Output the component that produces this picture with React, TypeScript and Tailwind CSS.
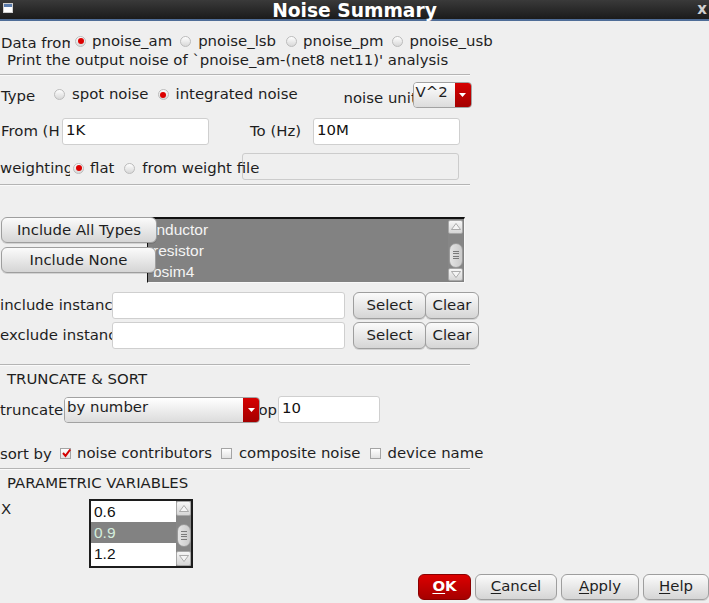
import React from 'react';
import clsx from 'clsx';

// small widgets that mimic the Cadence/Qt dialog look

function Radio({ on = false }: { on?: boolean }) {
  return (
    <span className="inline-flex h-[11px] w-[11px] shrink-0 items-center justify-center rounded-full border border-[#bcbcbc] bg-linear-to-b from-[#fefefe] to-[#d8d8d8]">
      {on && <span className="h-[6px] w-[6px] rounded-full bg-[#dc0000]" />}
    </span>
  );
}

function Check({ on = false }: { on?: boolean }) {
  return (
    <span className="relative inline-flex h-[11px] w-[11px] shrink-0 border border-[#a4a4a4] bg-linear-to-b from-white to-[#e2e2e2]">
      {on && (
        <svg viewBox="0 0 11 11" className="absolute left-[0px] top-[-1px] h-[11px] w-[11px]">
          <path d="M2 5 L4.5 7.8 L9.2 1.5" stroke="#d40000" strokeWidth="2" fill="none" />
        </svg>
      )}
    </span>
  );
}

function Btn({ className, children }: { className?: string; children: React.ReactNode }) {
  return (
    <div
      className={clsx(
        'flex items-center justify-center rounded-[6px] border border-[#9e9e9e] bg-linear-to-b from-[#fbfbfb] to-[#d5d5d5] text-[#1e1e1e] shadow-[0_1px_0_rgba(0,0,0,0.12)]',
        className,
      )}
    >
      {children}
    </div>
  );
}

function Combo({ className, value }: { className?: string; value: string }) {
  return (
    <div className={clsx('flex h-[26px] overflow-hidden rounded-[4px] border border-[#a2a2a2]', className)}>
      <div className="flex-1 whitespace-nowrap bg-linear-to-b from-white to-[#dcdcdc] pl-[2px] pt-[1px] leading-[17px] text-[#1e1e1e]">
        {value}
      </div>
      <div className="flex w-[16px] items-center justify-center bg-linear-to-b from-[#d60000] to-[#a40000]">
        <svg viewBox="0 0 7 4" className="h-[4px] w-[7px]">
          <path d="M0 0 L7 0 L3.5 4 Z" fill="#ffffff" />
        </svg>
      </div>
    </div>
  );
}

function Field({ className, value = '' }: { className?: string; value?: string }) {
  return (
    <div className={clsx('h-[27px] rounded-[3px] border border-[#cfcfcf] bg-white pl-[3px] pt-[3px] leading-[17px] text-[#111]', className)}>
      {value}
    </div>
  );
}

function Arrow({ up }: { up?: boolean }) {
  return (
    <div className="flex h-[15px] items-center justify-center rounded-[2px] border border-[#a8a8a8] bg-linear-to-b from-[#f6f6f6] to-[#d6d6d6]">
      <svg viewBox="0 0 10 7" className="h-[7px] w-[10px]">
        <path d={up ? 'M0.5 6.5 L5 0.5 L9.5 6.5 Z' : 'M0.5 0.5 L5 6.5 L9.5 0.5 Z'} fill="#f4f4f4" stroke="#9a9a9a" strokeWidth="0.8" />
      </svg>
    </div>
  );
}

function VScroll({ thumbTop, thumbH }: { thumbTop: string; thumbH: string }) {
  return (
    <div className="flex w-[15px] shrink-0 flex-col bg-[#868686]">
      <Arrow up />
      <div className="flex flex-1 flex-col items-center">
        <div
          className={clsx(
            'flex w-[14px] flex-col items-center justify-center gap-[1.5px] rounded-full border border-[#9a9a9a] bg-linear-to-r from-[#e4e4e4] to-[#cacaca]',
            thumbTop,
            thumbH,
          )}
        >
          {[0, 1, 2, 3].map((i) => (
            <span key={i} className="h-[1px] w-[6px] bg-[#7a7a7a]" />
          ))}
        </div>
      </div>
      <Arrow />
    </div>
  );
}

function Sep() {
  return <div className="h-[1px] w-[470px] bg-[#b4b4b4] shadow-[0_1px_0_#fafafa]" />;
}

export default function App() {
  return (
    <div className="h-[603px] w-[709px] overflow-hidden bg-[#efefef] font-['DejaVu_Sans',sans-serif] text-[14.9px] leading-[17px] text-[#1e1e1e]">
      {/* window title bar */}
      <div className="relative flex h-[21px] items-center justify-center border-b-2 border-[#4f6d97] bg-linear-to-b from-[#3a3a3a] to-[#1b1b1b]">
        <div className="absolute left-[3px] top-[3px] h-[10px] w-[10px] border border-[#d0d0d0] bg-white">
          <div className="h-[3px] bg-[#5a7cae]" />
        </div>
        <span className="pt-[1px] text-[18.67px] font-bold leading-[19px] text-white">Noise Summary</span>
        <span className="absolute right-[2px] top-[1px] text-[15px] font-bold leading-[16px] text-[#d0d0d0]">x</span>
      </div>

      <div className="flex flex-col">
        {/* data from */}
        <div className="mt-[10px] flex h-[20px] items-center">
          <span className="w-[70px] shrink-0 overflow-hidden whitespace-nowrap pl-[1px] pt-[4px]">Data from</span>
          <div className="ml-[5px] flex items-center">
            <Radio on />
            <span className="ml-[6px] mr-[8px]">pnoise_am</span>
            <Radio />
            <span className="ml-[7px] mr-[10px]">pnoise_lsb</span>
            <Radio />
            <span className="ml-[6px] mr-[9px]">pnoise_pm</span>
            <Radio />
            <span className="ml-[6px]">pnoise_usb</span>
          </div>
        </div>
        <div className="mt-[1px] h-[16px] whitespace-nowrap pl-[7px] leading-[16px]">
          Print the output noise of `pnoise_am-(net8 net11)' analysis
        </div>
        <div className="mt-[6px]">
          <Sep />
        </div>

        {/* type */}
        <div className="mt-[7px] flex h-[26px] items-start">
          <span className="mt-[6px] w-[54px] shrink-0 pl-[1px]">Type</span>
          <div className="mt-[4px] flex items-center">
            <Radio />
            <span className="ml-[7px] mr-[9px]">spot noise</span>
            <Radio on />
            <span className="ml-[7px]">integrated noise</span>
          </div>
          <span className="ml-[46px] mt-[8px] w-[69px] shrink-0 overflow-hidden whitespace-nowrap">noise units</span>
          <Combo className="w-[59px]" value="V^2" />
        </div>

        {/* frequency range */}
        <div className="mt-[10px] flex h-[27px] items-center">
          <span className="w-[59px] shrink-0 overflow-hidden whitespace-nowrap pl-[1px]">From (Hz)</span>
          <Field className="ml-[3px] w-[147px]" value="1K" />
          <span className="ml-[41px] w-[63px] shrink-0">To (Hz)</span>
          <Field className="w-[147px]" value="10M" />
        </div>

        {/* weighting */}
        <div className="mt-[8px] flex h-[27px] items-center">
          <span className="w-[70px] shrink-0 overflow-hidden whitespace-nowrap pt-[4px]">weighting</span>
          <div className="relative z-10 ml-[3px] flex items-center pt-[3px]">
            <Radio on />
            <span className="ml-[6px] mr-[10px]">flat</span>
            <Radio />
            <span className="ml-[7px]">from weight file</span>
          </div>
          <div className="ml-[-17px] h-[27px] w-[217px] rounded-[3px] border border-[#cccccc] bg-[#efefef]" />
        </div>
        <div className="mt-[4px]">
          <Sep />
        </div>

        {/* device types */}
        <div className="mt-[32px] flex h-[66px]">
          <div className="relative z-10 flex w-[157px] shrink-0 flex-col gap-[4px] pl-[1px]">
            <Btn className="h-[26px] w-[156px]">Include All Types</Btn>
            <Btn className="h-[26px] w-[155px]">Include None</Btn>
          </div>
          <div className="ml-[-10px] flex w-[318px] border-l border-t-2 border-b border-r border-l-[#111] border-t-[#111] border-b-[#f8f8f8] border-r-[#f8f8f8] bg-[#828282] font-['Liberation_Sans',sans-serif] text-[15.5px] text-[#f4f4f4]">
            <div className="flex-1 pl-[5px] leading-[21px]">
              <div>inductor</div>
              <div>resistor</div>
              <div>bsim4</div>
            </div>
            <div className="mr-[1px] mt-[1px] mb-[1px] flex">
              <VScroll thumbTop="mt-[9px]" thumbH="h-[25px]" />
            </div>
          </div>
        </div>

        {/* instances */}
        <div className="mt-[9px] flex h-[27px] items-center">
          <span className="w-[112px] shrink-0 overflow-hidden whitespace-nowrap">include instances</span>
          <Field className="w-[233px]" />
          <Btn className="ml-[8px] h-[27px] w-[73px]">Select</Btn>
          <Btn className="ml-[-1px] h-[27px] w-[54px]">Clear</Btn>
        </div>
        <div className="mt-[3px] flex h-[27px] items-center">
          <span className="w-[112px] shrink-0 overflow-hidden whitespace-nowrap">exclude instances</span>
          <Field className="w-[233px]" />
          <Btn className="ml-[8px] h-[27px] w-[73px]">Select</Btn>
          <Btn className="ml-[-1px] h-[27px] w-[54px]">Clear</Btn>
        </div>
        <div className="mt-[15px]">
          <Sep />
        </div>

        {/* truncate & sort */}
        <div className="mt-[6px] h-[16px] pl-[7px] leading-[16px]">TRUNCATE &amp; SORT</div>
        <div className="mt-[9px] flex h-[27px] items-center">
          <span className="w-[64px] shrink-0 pt-[2px]">truncate</span>
          <Combo className="w-[196px]" value="by number" />
          <span className="flex w-[17px] shrink-0 justify-end overflow-hidden whitespace-nowrap pt-[1px]">top</span>
          <Field className="ml-[1px] w-[102px]" value="10" />
        </div>
        <div className="mt-[20px] flex h-[20px] items-center">
          <span className="w-[60px] shrink-0 pt-[3px]">sort by</span>
          <Check on />
          <span className="ml-[6px] mr-[9px]">noise contributors</span>
          <Check />
          <span className="ml-[7px] mr-[9px]">composite noise</span>
          <Check />
          <span className="ml-[7px]">device name</span>
        </div>
        <div className="mt-[5px]">
          <Sep />
        </div>

        {/* parametric variables */}
        <div className="mt-[6px] h-[16px] pl-[7px] leading-[16px]">PARAMETRIC VARIABLES</div>
        <div className="mt-[8px] flex h-[69px]">
          <span className="mt-[2px] w-[89px] shrink-0 pl-[1px]">X</span>
          <div className="flex w-[104px] border-2 border-[#1c1c1c] bg-white font-['Liberation_Sans',sans-serif] text-[15.5px] leading-[21px]">
            <div className="flex-1">
              <div className="pl-[3px] text-[#111]">0.6</div>
              <div className="bg-[#828282] pl-[3px] text-[#d4eedc]">0.9</div>
              <div className="pl-[3px] text-[#111]">1.2</div>
            </div>
            <VScroll thumbTop="mt-[8px]" thumbH="h-[23px]" />
          </div>
        </div>

        {/* dialog buttons */}
        <div className="mt-[5px] flex h-[27px] items-center pl-[418px]">
          <div className="flex h-[26px] w-[55px] items-center justify-center rounded-[6px] border border-[#8a0000] bg-linear-to-b from-[#dc0000] to-[#a60000] font-bold text-white">
            <span className="underline underline-offset-2">O</span>K
          </div>
          <Btn className="ml-[4px] h-[26px] w-[85px]">
            <span className="underline underline-offset-2">C</span>ancel
          </Btn>
          <Btn className="ml-[4px] h-[26px] w-[81px]">
            <span className="underline underline-offset-2">A</span>pply
          </Btn>
          <Btn className="ml-[4px] h-[26px] w-[66px] shrink-0">
            <span className="underline underline-offset-2">H</span>elp
          </Btn>
        </div>
      </div>
    </div>
  );
}
